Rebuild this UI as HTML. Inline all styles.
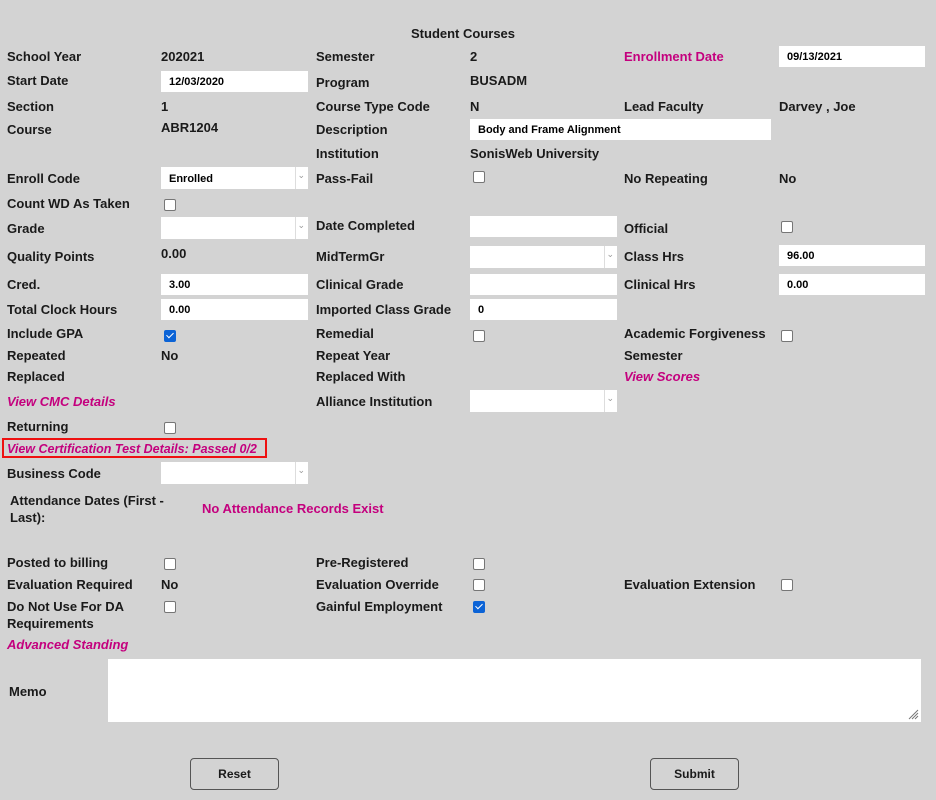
<!DOCTYPE html>
<html><head><meta charset="utf-8"><style>
html,body{margin:0;padding:0;}
body{width:936px;height:800px;background:#d3d3d3;position:relative;overflow:hidden;font-family:"Liberation Sans",Arial,sans-serif;color:#1a1a1a;}
.t{position:absolute;font-size:13px;font-weight:bold;line-height:16px;white-space:nowrap;margin-top:1px;}
.m{color:#c4007e;}
.i{font-style:italic;}
.in{position:absolute;background:#fff;height:21px;font-size:11px;font-weight:bold;line-height:22px;padding-left:8px;box-sizing:border-box;color:#000;}
.sel{position:absolute;background:#fff;height:22px;box-sizing:border-box;font-size:11px;font-weight:bold;line-height:25px;padding-left:8px;color:#000;}
.sel:after{content:"";position:absolute;right:0;top:0;width:12px;height:100%;border-left:1px solid #ddd;}
.sel:before{content:"⌄";position:absolute;right:3px;top:-4px;font-size:9px;color:#999;font-weight:normal;}
.cb{position:absolute;width:10px;height:10px;background:#fff;border:1px solid #767676;border-radius:2px;}
.cb.on{background:#0b63d6;border-color:#0b63d6;}
.cb.on:after{content:"";position:absolute;left:3px;top:0px;width:3px;height:6px;border:solid #fff;border-width:0 1.5px 1.5px 0;transform:rotate(45deg);}
.btn{position:absolute;width:89px;height:32px;border:1px solid #555;border-radius:4px;box-sizing:border-box;font-size:12px;font-weight:bold;text-align:center;line-height:31px;}
</style></head><body>
<div class="t" style="left:411px;top:25px">Student Courses</div>

<div class="t" style="left:7px;top:48px">School Year</div>
<div class="t" style="left:161px;top:48px">202021</div>
<div class="t" style="left:316px;top:48px">Semester</div>
<div class="t" style="left:470px;top:48px">2</div>
<div class="t m" style="left:624px;top:48px">Enrollment Date</div>
<div class="in" style="left:779px;top:46px;width:146px">09/13/2021</div>

<div class="t" style="left:7px;top:72px">Start Date</div>
<div class="in" style="left:161px;top:71px;width:147px">12/03/2020</div>
<div class="t" style="left:316px;top:74px">Program</div>
<div class="t" style="left:470px;top:72px">BUSADM</div>

<div class="t" style="left:7px;top:98px">Section</div>
<div class="t" style="left:161px;top:98px">1</div>
<div class="t" style="left:316px;top:98px">Course Type Code</div>
<div class="t" style="left:470px;top:98px">N</div>
<div class="t" style="left:624px;top:98px">Lead Faculty</div>
<div class="t" style="left:779px;top:98px">Darvey , Joe</div>

<div class="t" style="left:7px;top:121px">Course</div>
<div class="t" style="left:161px;top:119px">ABR1204</div>
<div class="t" style="left:316px;top:121px">Description</div>
<div class="in" style="left:470px;top:119px;width:301px">Body and Frame Alignment</div>

<div class="t" style="left:316px;top:145px">Institution</div>
<div class="t" style="left:470px;top:145px">SonisWeb University</div>

<div class="t" style="left:7px;top:170px">Enroll Code</div>
<div class="sel" style="left:161px;top:167px;width:147px">Enrolled</div>
<div class="t" style="left:316px;top:170px">Pass-Fail</div>
<div class="cb" style="left:473px;top:171px"></div>
<div class="t" style="left:624px;top:170px">No Repeating</div>
<div class="t" style="left:779px;top:170px">No</div>

<div class="t" style="left:7px;top:195px">Count WD As Taken</div>
<div class="cb" style="left:164px;top:199px"></div>

<div class="t" style="left:7px;top:220px">Grade</div>
<div class="sel" style="left:161px;top:217px;width:147px"></div>
<div class="t" style="left:316px;top:217px">Date Completed</div>
<div class="in" style="left:470px;top:216px;width:147px"></div>
<div class="t" style="left:624px;top:220px">Official</div>
<div class="cb" style="left:781px;top:221px"></div>

<div class="t" style="left:7px;top:248px">Quality Points</div>
<div class="t" style="left:161px;top:245px">0.00</div>
<div class="t" style="left:316px;top:248px">MidTermGr</div>
<div class="sel" style="left:470px;top:246px;width:147px"></div>
<div class="t" style="left:624px;top:248px">Class Hrs</div>
<div class="in" style="left:779px;top:245px;width:146px">96.00</div>

<div class="t" style="left:7px;top:276px">Cred.</div>
<div class="in" style="left:161px;top:274px;width:147px">3.00</div>
<div class="t" style="left:316px;top:276px">Clinical Grade</div>
<div class="in" style="left:470px;top:274px;width:147px"></div>
<div class="t" style="left:624px;top:276px">Clinical Hrs</div>
<div class="in" style="left:779px;top:274px;width:146px">0.00</div>

<div class="t" style="left:7px;top:301px">Total Clock Hours</div>
<div class="in" style="left:161px;top:299px;width:147px">0.00</div>
<div class="t" style="left:316px;top:301px">Imported Class Grade</div>
<div class="in" style="left:470px;top:299px;width:147px">0</div>

<div class="t" style="left:7px;top:325px">Include GPA</div>
<div class="cb on" style="left:164px;top:330px"></div>
<div class="t" style="left:316px;top:325px">Remedial</div>
<div class="cb" style="left:473px;top:330px"></div>
<div class="t" style="left:624px;top:325px">Academic Forgiveness</div>
<div class="cb" style="left:781px;top:330px"></div>

<div class="t" style="left:7px;top:347px">Repeated</div>
<div class="t" style="left:161px;top:347px">No</div>
<div class="t" style="left:316px;top:347px">Repeat Year</div>
<div class="t" style="left:624px;top:347px">Semester</div>

<div class="t" style="left:7px;top:368px">Replaced</div>
<div class="t" style="left:316px;top:368px">Replaced With</div>
<div class="t m i" style="left:624px;top:368px">View Scores</div>

<div class="t m i" style="left:7px;top:393px">View CMC Details</div>
<div class="t" style="left:316px;top:393px">Alliance Institution</div>
<div class="sel" style="left:470px;top:390px;width:147px"></div>

<div class="t" style="left:7px;top:418px">Returning</div>
<div class="cb" style="left:164px;top:422px"></div>

<div style="position:absolute;left:2px;top:438px;width:261px;height:16px;border:2px solid #ee1111;"></div>
<div class="t m i" style="left:7px;top:440px;font-size:12.5px">View Certification Test Details: Passed 0/2</div>

<div class="t" style="left:7px;top:465px">Business Code</div>
<div class="sel" style="left:161px;top:462px;width:147px"></div>

<div class="t" style="left:10px;top:492px">Attendance Dates (First -</div>
<div class="t" style="left:10px;top:509px">Last):</div>
<div class="t m" style="left:202px;top:500px">No Attendance Records Exist</div>

<div class="t" style="left:7px;top:554px">Posted to billing</div>
<div class="cb" style="left:164px;top:558px"></div>
<div class="t" style="left:316px;top:554px">Pre-Registered</div>
<div class="cb" style="left:473px;top:558px"></div>

<div class="t" style="left:7px;top:576px">Evaluation Required</div>
<div class="t" style="left:161px;top:576px">No</div>
<div class="t" style="left:316px;top:576px">Evaluation Override</div>
<div class="cb" style="left:473px;top:579px"></div>
<div class="t" style="left:624px;top:576px">Evaluation Extension</div>
<div class="cb" style="left:781px;top:579px"></div>

<div class="t" style="left:7px;top:598px">Do Not Use For DA</div>
<div class="t" style="left:7px;top:615px">Requirements</div>
<div class="cb" style="left:164px;top:601px"></div>
<div class="t" style="left:316px;top:598px">Gainful Employment</div>
<div class="cb on" style="left:473px;top:601px"></div>

<div class="t m i" style="left:7px;top:636px">Advanced Standing</div>

<div class="t" style="left:9px;top:683px">Memo</div>
<div style="position:absolute;left:108px;top:659px;width:813px;height:63px;background:#fff;">
<svg style="position:absolute;right:2px;bottom:2px" width="12" height="12" viewBox="0 0 12 12"><path d="M11 2L2 11M11 5L5 11M11 8L8 11" stroke="#777" stroke-width="1"/></svg>
</div>

<div class="btn" style="left:190px;top:758px">Reset</div>
<div class="btn" style="left:650px;top:758px">Submit</div>
</body></html>
